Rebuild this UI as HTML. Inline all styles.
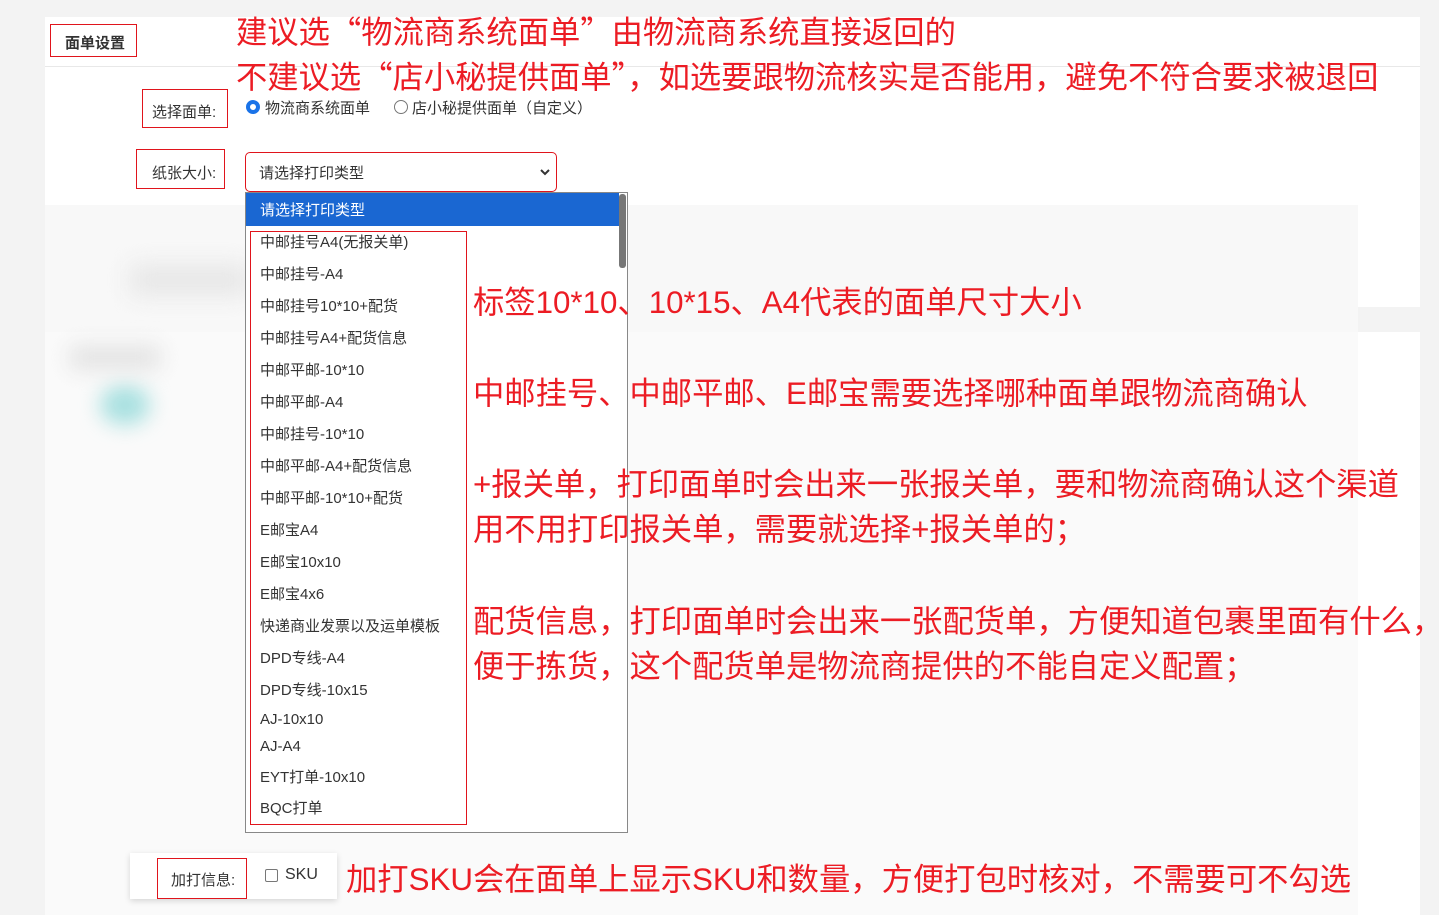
<!DOCTYPE html>
<html><head><meta charset="utf-8"><style>
*{margin:0;padding:0;box-sizing:border-box}
body{width:1439px;height:915px;background:#f3f3f3;position:relative;overflow:hidden;font-family:"Liberation Sans","Noto Sans CJK SC",sans-serif;color:#333}
.a{position:absolute}
.card{background:#fff}
.red{color:#ec1c24;font-size:31.3px;white-space:nowrap;line-height:1;font-family:"Liberation Sans","Noto Sans CJK SC",sans-serif}
.q{font-family:"Noto Sans CJK SC",sans-serif}
.rb{position:absolute;border:1px solid #e0141c}
.lbl{font-size:15px;white-space:nowrap}
.it{position:absolute;left:14px;font-size:15px;color:#333;white-space:nowrap;line-height:1}
</style></head><body>
<div class="a card" style="left:45px;top:17px;width:1375px;height:290px"></div>
<div class="a" style="left:45px;top:66px;width:1375px;height:1px;background:#e8e8e8"></div>
<div class="a" style="left:45px;top:205px;width:1313px;height:640px;background:#f8f8f8"></div>
<div class="a card" style="left:45px;top:332px;width:1375px;height:583px;background:#fafafa"></div>
<div class="a" style="left:1358px;top:332px;width:62px;height:583px;background:#fff"></div>
<div class="a" style="left:130px;top:265px;width:120px;height:30px;background:#e6e6e6;filter:blur(12px)"></div>
<div class="a" style="left:100px;top:385px;width:50px;height:40px;background:#a8e0e0;filter:blur(10px);border-radius:50%"></div>
<div class="a" style="left:70px;top:345px;width:90px;height:25px;background:#e4e4e4;filter:blur(10px)"></div>

<div class="rb" style="left:50px;top:24px;width:87px;height:33px"></div>
<div class="a lbl" style="left:65px;top:32px;font-weight:bold">面单设置</div>
<div class="rb" style="left:142px;top:89px;width:86px;height:39px"></div>
<div class="a lbl" style="left:152px;top:101px">选择面单:</div>
<div class="a" style="left:246px;top:100px;width:14px;height:14px;border-radius:50%;border:4px solid #1a73e8;background:#fff"></div>
<div class="a lbl" style="left:265px;top:97px;font-size:15px">物流商系统面单</div>
<div class="a" style="left:394px;top:100px;width:14px;height:14px;border-radius:50%;border:1px solid #777;background:#fff"></div>
<div class="a lbl" style="left:412px;top:97px">店小秘提供面单（自定义）</div>
<div class="rb" style="left:136px;top:149px;width:89px;height:40px"></div>
<div class="a lbl" style="left:152px;top:162px">纸张大小:</div>
<div class="a" style="left:245px;top:152px;width:312px;height:40px;border:1px solid #e0141c;border-radius:5px;background:#fff"></div>
<div class="a lbl" style="left:259px;top:162px">请选择打印类型</div>
<svg class="a" style="left:539px;top:167px" width="12" height="10"><path d="M2 3l4 4 4-4" stroke="#333" stroke-width="2" fill="none"/></svg>

<div class="a" style="left:245px;top:192px;width:383px;height:641px;background:#fff;border:1px solid #888">
 <div class="a" style="left:0;top:0;width:374px;height:33px;background:#1a67d2"></div>
 <div class="it" style="top:10px;color:#fff">请选择打印类型</div>
 <div class="a" style="left:373px;top:0;width:8px;height:639px;background:#fff"></div>
 <div class="a" style="left:373px;top:1px;width:7px;height:74px;background:#777;border-radius:3px"></div>
 <div class="rb" style="left:4px;top:38px;width:217px;height:594px"></div>
 <div class="it" style="top:42px">中邮挂号A4(无报关单)</div>
 <div class="it" style="top:74px">中邮挂号-A4</div>
 <div class="it" style="top:106px">中邮挂号10*10+配货</div>
 <div class="it" style="top:138px">中邮挂号A4+配货信息</div>
 <div class="it" style="top:170px">中邮平邮-10*10</div>
 <div class="it" style="top:202px">中邮平邮-A4</div>
 <div class="it" style="top:234px">中邮挂号-10*10</div>
 <div class="it" style="top:266px">中邮平邮-A4+配货信息</div>
 <div class="it" style="top:298px">中邮平邮-10*10+配货</div>
 <div class="it" style="top:330px">E邮宝A4</div>
 <div class="it" style="top:362px">E邮宝10x10</div>
 <div class="it" style="top:394px">E邮宝4x6</div>
 <div class="it" style="top:426px">快递商业发票以及运单模板</div>
 <div class="it" style="top:458px">DPD专线-A4</div>
 <div class="it" style="top:490px">DPD专线-10x15</div>
 <div class="it" style="top:519px">AJ-10x10</div>
 <div class="it" style="top:546px">AJ-A4</div>
 <div class="it" style="top:577px">EYT打单-10x10</div>
 <div class="it" style="top:608px">BQC打单</div>
</div>

<div class="a" style="left:130px;top:853px;width:207px;height:46px;background:#fff;box-shadow:0 2px 6px rgba(0,0,0,.15)"></div>
<div class="rb" style="left:157px;top:858px;width:90px;height:41px"></div>
<div class="a lbl" style="left:171px;top:869px">加打信息:</div>
<div class="a" style="left:265px;top:869px;width:13px;height:13px;border:1px solid #777;border-radius:2px"></div>
<div class="a lbl" style="left:285px;top:866px;font-size:16px">SKU</div>

<div class="a red" style="left:236px;top:15px">建议选<span class="q">“</span>物流商系统面单<span class="q">”</span>由物流商系统直接返回的</div>
<div class="a red" style="left:236px;top:60px">不建议选<span class="q">“</span>店小秘提供面单<span class="q">”</span>，如选要跟物流核实是否能用，避免不符合要求被退回</div>
<div class="a red" style="left:473px;top:287px">标签10*10、10*15、A4代表的面单尺寸大小</div>
<div class="a red" style="left:473px;top:378px">中邮挂号、中邮平邮、E邮宝需要选择哪种面单跟物流商确认</div>
<div class="a red" style="left:473px;top:469px">+报关单，打印面单时会出来一张报关单，要和物流商确认这个渠道</div>
<div class="a red" style="left:473px;top:514px">用不用打印报关单，需要就选择+报关单的；</div>
<div class="a red" style="left:473px;top:606px">配货信息，打印面单时会出来一张配货单，方便知道包裹里面有什么，</div>
<div class="a red" style="left:473px;top:651px">便于拣货，这个配货单是物流商提供的不能自定义配置；</div>
<div class="a red" style="left:346px;top:864px">加打SKU会在面单上显示SKU和数量，方便打包时核对，不需要可不勾选</div>
</body></html>
